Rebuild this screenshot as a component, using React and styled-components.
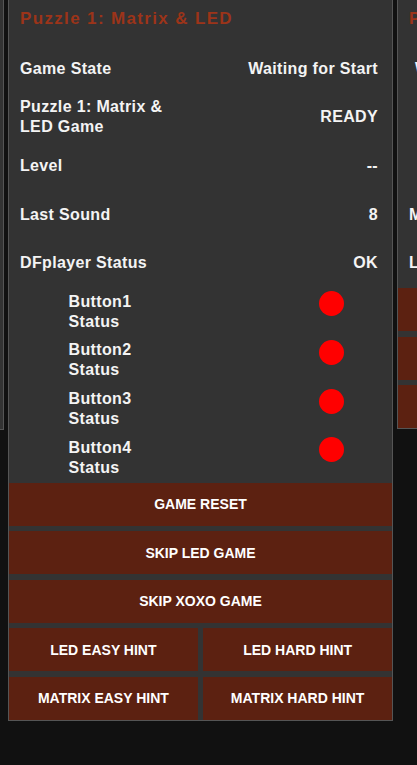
import React from "react";
import styled, { createGlobalStyle } from "styled-components";

const GlobalStyle = createGlobalStyle`
body {
  margin: 0;
  background: #111111;
  overflow: hidden;
  font-family: "Liberation Sans", Arial, sans-serif;
}
`;

const Track = styled.div`
display: flex;
align-items: flex-start;
gap: 4px;
margin-top: -1px;
margin-left: -381px;
`;

const Card = styled.div`
box-sizing: border-box;
flex-shrink: 0;
width: 385px;
background: #333333;
border: 1px solid #555555;
display: flex;
flex-direction: column;
`;

const Title = styled.h2`
margin: 9px 0 15.5px 11px;
font-size: 17px;
line-height: 20px;
font-weight: 700;
letter-spacing: 1.35px;
color: #9c3419;
white-space: nowrap;
`;

const Table = styled.div`
padding: 0 14px ${props => props.bottom || 0}px 11px;
`;

const Row = styled.div`
display: flex;
align-items: center;
justify-content: space-between;
height: 48.6px;
font-size: 16px;
line-height: 20px;
font-weight: 700;
letter-spacing: 0.35px;
color: #f4f4f4;
`;

const Label = styled.span`
max-width: 160px;
padding-left: ${props => props.indent || 0}px;
`;

const Value = styled.span`
text-align: right;
white-space: nowrap;
`;

const SubRow = styled(Row)`
justify-content: flex-start;
padding-left: 48.5px;
`;

const SubLabel = styled.span`
width: 80px;
`;

const Led = styled.span`
align-self: flex-start;
margin: 4px 34px 0 auto;
width: 25px;
height: 25px;
border-radius: 50%;
background: ${props => props.on ? "#00d000" : "#ff0000"};
`;

const Buttons = styled.div`
display: grid;
grid-template-columns: ${props => props.cols === 2 ? "1fr 1fr" : "1fr"};
gap: 5.5px;
margin-top: ${props => props.top || 0}px;
`;

const Btn = styled.button`
height: 43px;
border: none;
padding: 0;
background: #5c2111;
color: #ffffff;
font-family: "Liberation Sans", Arial, sans-serif;
font-size: 14px;
font-weight: 700;
cursor: pointer;
`;

const mainRows = [
    { label: "Game State", value: "Waiting for Start" },
    { label: "Puzzle 1: Matrix & LED Game", value: "READY" },
    { label: "Level", value: "--" },
    { label: "Last Sound", value: "8" },
    { label: "DFplayer Status", value: "OK" },
];

const introRows = [
    { label: "Game State", value: "Waiting for Start" },
    { label: "Puzzle 0: Intro", value: "READY" },
    { label: "Door Sensor", value: "CLOSED" },
    { label: "Lights", value: "OFF" },
    { label: "Last Sound", value: "--" },
    { label: "DFplayer Status", value: "OK" },
    { label: "Timer", value: "00:00" },
];

const xoxoRows = [
    { label: "Waiting", value: "", indent: 6 },
    { label: "", value: "READY" },
    { label: "", value: "--" },
    { label: "Matrix Status", value: "OK" },
    { label: "LED Status", value: "OK" },
];

function InfoRows({ rows, bottom }) {
    return (
        <Table bottom={bottom}>
            {rows.map((r, i) => (
                <Row key={i}>
                    <Label indent={r.indent}>{r.label}</Label>
                    <Value>{r.value}</Value>
                </Row>
            ))}
        </Table>
    );
}

function App() {
    return (
        <>
            <GlobalStyle />
            <Track>
                <Card>
                    <Title>Puzzle 0: Intro</Title>
                    <InfoRows rows={introRows} bottom={44} />
                </Card>
                <Card>
                    <Title>Puzzle 1: Matrix &amp; LED</Title>
                    <Table>
                        {mainRows.map((r, i) => (
                            <Row key={i}>
                                <Label>{r.label}</Label>
                                <Value>{r.value}</Value>
                            </Row>
                        ))}
                        {[1, 2, 3, 4].map(n => (
                            <SubRow key={n}>
                                <SubLabel>Button{n} Status</SubLabel>
                                <Led />
                            </SubRow>
                        ))}
                    </Table>
                    <Buttons top={1}>
                        <Btn>GAME RESET</Btn>
                        <Btn>SKIP LED GAME</Btn>
                        <Btn>SKIP XOXO GAME</Btn>
                        <Buttons cols={2}>
                            <Btn>LED EASY HINT</Btn>
                            <Btn>LED HARD HINT</Btn>
                            <Btn>MATRIX EASY HINT</Btn>
                            <Btn>MATRIX HARD HINT</Btn>
                        </Buttons>
                    </Buttons>
                </Card>
                <Card>
                    <Title>Puzzle 2: XOXO</Title>
                    <InfoRows rows={xoxoRows} />
                    <Buttons top={1}>
                        <Btn>GAME RESET</Btn>
                        <Btn>SKIP GAME</Btn>
                        <Btn>HINT</Btn>
                    </Buttons>
                </Card>
            </Track>
        </>
    );
}

export default App;
